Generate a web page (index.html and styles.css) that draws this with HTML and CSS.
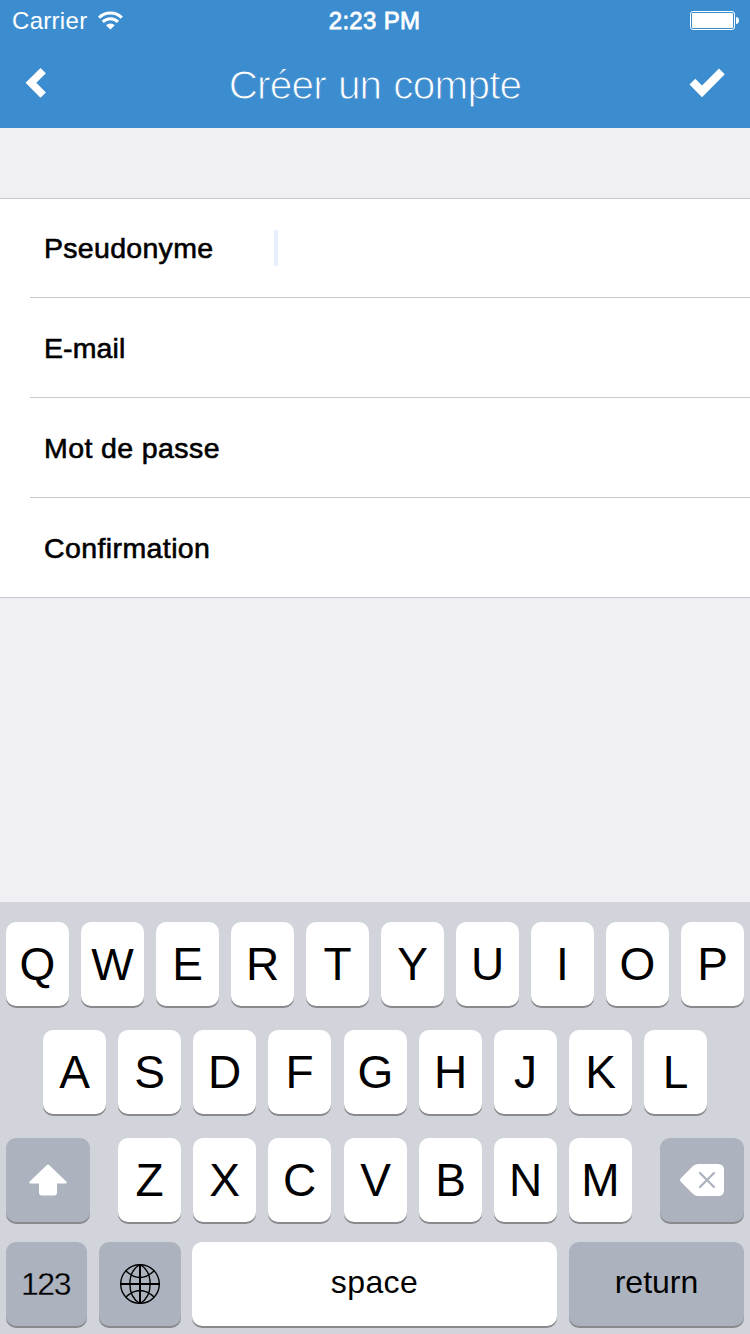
FILE: index.html
```html
<!DOCTYPE html>
<html lang="fr">
<head>
<meta charset="utf-8">
<title>Créer un compte</title>
<link rel="stylesheet" href="styles.css">
</head>
<body>
<div class="screen">
  <header class="header">
    <div class="status">
      <div class="status-left">
        <span class="carrier">Carrier</span>
        <svg class="wifi" width="26" height="20" viewBox="0 0 26 20"><g fill="none" stroke="#fff" stroke-width="3"><path d="M1 6.600a16.300 16.300 0 0 1 22.800 0"/><path d="M4.800 10.900a10.800 10.800 0 0 1 15.200 0"/></g><path d="M8 14.200a6.300 6.300 0 0 1 8.800 0L12.400 18.500z" fill="#fff"/></svg>
      </div>
      <span class="time">2:23 PM</span>
      <svg class="battery" width="50" height="20" viewBox="0 0 50 20"><rect x=".5" y=".5" width="44" height="18" rx="2.500" fill="none" stroke="#fff"/><rect x="2" y="2" width="41" height="15" rx="1" fill="#fff"/><path d="M46 6c2 .2 3 1.600 3 3.500S48 12.800 46 13z" fill="#fff"/></svg>
    </div>
    <div class="nav">
      <svg class="nav-icon" width="36" height="32" viewBox="0 0 36 32"><path d="M15.500 1 20.900 6.200 11.300 15.800 20.900 25.500 15.500 30.800.6 15.800z" fill="#fff"/></svg>
      <h1 class="title">Créer un compte</h1>
      <svg class="nav-icon" width="36" height="32" viewBox="0 0 36 32"><path d="M.5 17.500 6.300 11.700 13 18.400 30 1.500 35.800 7.300 13 30.300z" fill="#fff"/></svg>
    </div>
  </header>
  <main class="form">
    <label class="row"><span class="label label-first">Pseudonyme</span><span class="caret"></span></label>
    <label class="row"><span class="label label-mail">E-mail</span></label>
    <label class="row"><span class="label label-pass">Mot de passe</span></label>
    <label class="row"><span class="label label-pass">Confirmation</span></label>
  </main>
  <section class="keyboard">
    <div class="keys">
      <span class="key">Q</span><span class="key key-w">W</span><span class="key">E</span><span class="key">R</span><span class="key">T</span><span class="key">Y</span><span class="key">U</span><span class="key">I</span><span class="key">O</span><span class="key">P</span>
    </div>
    <div class="keys keys-home">
      <span class="key">A</span><span class="key">S</span><span class="key">D</span><span class="key">F</span><span class="key key-mid">G</span><span class="key">H</span><span class="key">J</span><span class="key">K</span><span class="key">L</span>
    </div>
    <div class="keys keys-lower">
      <span class="key key-dark key-shift"><svg width="38" height="32" viewBox="0 0 38 32"><path d="M18 .9q1-1 2 0L37.300 17.600q1 1.900-.8 1.900H28V28.500q0 3-3 3H13q-3 0-3-3V19.500H1.500Q-.3 19.500.7 17.600z" fill="#fff"/></svg></span>
      <span class="key">Z</span><span class="key">X</span><span class="key">C</span><span class="key key-mid">V</span><span class="key">B</span><span class="key">N</span><span class="key">M</span>
      <span class="key key-dark key-delete"><svg width="44" height="32" viewBox="0 0 44 32"><path d="M.8 14.300 12.500 2.500Q15 0 18 0H38q6 0 6 6V26q0 6-6 6H18q-3 0-5.500-2.500L.8 17.700Q-.6 16 .8 14.300z" fill="#fff"/><path d="M20 9 34 23M34 9 20 23" stroke="#acb3bf" stroke-width="2.300" stroke-linecap="round"/></svg></span>
    </div>
    <div class="keys keys-bottom">
      <span class="key key-dark key-num">123</span>
      <span class="key key-dark key-globe"><svg width="42" height="42" viewBox="0 0 42 42" fill="none" stroke="#000"><g stroke-width="1.400"><circle cx="21" cy="21" r="19.300"/><path d="M21 1.500C7.500 9 7.500 33 21 40.500M21 1.500C34.500 9 34.500 33 21 40.500M7 8Q21 21 35 8M7 34Q21 21 35 34"/></g><path d="M21 1V41M1 21H41" stroke-width="2"/></svg></span>
      <span class="key key-space">space</span>
      <span class="key key-dark key-return">return</span>
    </div>
  </section>
</div>
</body>
</html>
```
FILE: styles.css
```css
* { box-sizing: border-box; }
body {
  margin: 0;
  font-family: "Liberation Sans", Arial, sans-serif;
  color: #000;
}
.screen {
  display: flex;
  flex-direction: column;
  width: 750px;
  height: 1334px;
  overflow: hidden;
  background: #efeff4;
}
.header {
  height: 128px;
  background: #3c8dcf;
  color: #fff;
}
.status {
  display: grid;
  grid-template-columns: 1fr auto 1fr;
  align-items: center;
  height: 42px;
  padding: 0 10px 0 12px;
  font-size: 24px;
}
.status-left { display: flex; align-items: center; gap: 11px; }
.carrier { letter-spacing: .3px; }
.wifi { margin-bottom: 1px; }
.time { margin-right: 3px; letter-spacing: .3px; -webkit-text-stroke: .8px #fff; }
.battery { justify-self: end; }
.nav {
  display: flex;
  align-items: center;
  justify-content: space-between;
  height: 86px;
  padding: 0 25px;
}
.nav-icon { margin-bottom: 5px; }
.title {
  margin: 0;
  font-size: 40.5px;
  font-weight: 400;
  letter-spacing: -.8px;
  word-spacing: 1.5px;
  -webkit-text-stroke: 1px #3c8dcf;
}
.form {
  height: 400px;
  margin-top: 70px;
  padding-left: 30px;
  border-top: 1px solid #c8c7cc;
  border-bottom: 1px solid #c8c7cc;
  background: #fff;
}
.row {
  display: flex;
  align-items: center;
  height: 100px;
  padding-left: 14px;
  border-bottom: 1px solid #c8c7cc;
}
.row:first-child { height: 99px; }
.row:last-child { height: 99px; border-bottom: 0; }
.label {
  width: 230px;
  padding-top: 2px;
  font-size: 28.5px;
  letter-spacing: .3px;
  -webkit-text-stroke: .6px #000;
}
.label-first { padding-top: 0; }
.label-mail { letter-spacing: .1px; }
.label-pass { letter-spacing: .4px; }
.caret { width: 4px; height: 36px; background: #e8effd; }
.keyboard {
  display: flex;
  flex-direction: column;
  gap: 24px;
  height: 432px;
  margin-top: auto;
  padding: 20px 6px 0;
  background: #d1d4db;
}
.keys { display: flex; gap: 12px; height: 84px; }
.keys-home { padding-left: 37px; }
.keys-bottom { margin-top: -4px; }
.key {
  display: flex;
  flex: none;
  align-items: center;
  justify-content: center;
  width: 63px;
  height: 84px;
  border-radius: 10px;
  background: #fff;
  box-shadow: 0 2px 0 #898a8d;
  font-size: 46px;
}
.key-w { padding-top: 1px; font-size: 45px; }
.key-mid { margin-left: 1px; }
.key-dark { background: #acb3bf; }
.key-shift { width: 84px; margin-right: 16px; }
.key-delete { width: 84px; margin-left: 16px; }
.key-num {
  width: 81px;
  padding-right: 2px;
  font-size: 32px;
  letter-spacing: -1.4px;
  -webkit-text-stroke: .3px #acb3bf;
}
.key-globe { width: 82px; }
.key-space { width: 365px; margin-left: -1px; padding-bottom: 3px; font-size: 32px; letter-spacing: .4px; }
.key-return { width: 175px; padding-bottom: 3px; font-size: 32px; }
```
